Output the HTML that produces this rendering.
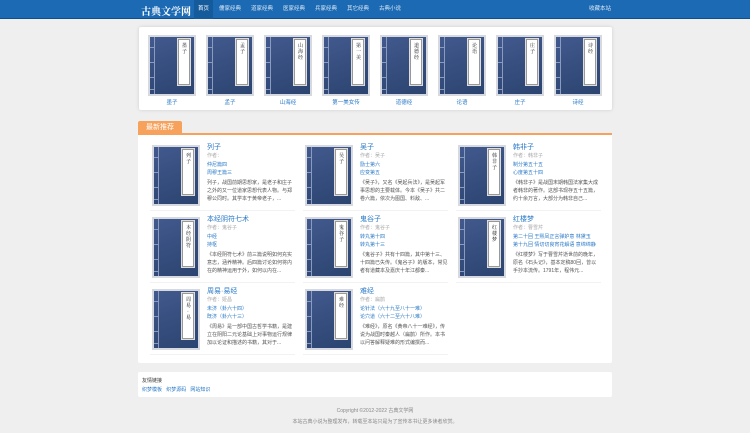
<!DOCTYPE html><html><head><meta charset="utf-8"><style>
*{margin:0;padding:0;box-sizing:border-box}
body{width:750px;height:433px;background:#efefef;font-family:"Liberation Sans","Noto Sans CJK SC",sans-serif;font-size:5px;color:#555;overflow:hidden;position:relative}
a{color:#2a7ac8;text-decoration:none}
.nav{position:absolute;left:0;top:0;width:750px;height:19px;background:#1b6ab3;border-bottom:1px solid #0f4f8a}
.logo{position:absolute;left:141px;top:3px;color:#fff;font-family:"Liberation Serif","Noto Serif CJK SC",serif;font-weight:bold;font-size:10px}
.nav .it{position:absolute;top:0;height:19px;line-height:19px;color:#dde9f5;font-size:5.5px}
.nav .on{background:#155a9a;color:#fff}
.box{position:absolute;background:#fff;border-radius:2px}
.cover{position:absolute;width:48px;height:61px;background:linear-gradient(160deg,#41598d,#2c4470);border:2px solid #d6d9e0}
.cover:before{content:"";position:absolute;left:4px;top:0;bottom:0;border-left:1px solid #8a9bbd}
.cover i{position:absolute;left:0;width:4px;border-top:1px solid #8a9bbd}
.lab{position:absolute;right:4px;top:2px;width:12px;height:46px;background:#fff;border:1px solid #999;box-shadow:0 0 0 1px #ddd;font-size:5px;color:#111;text-align:center;line-height:6px;padding:3px 3px 0;font-family:"Noto Serif CJK SC",serif;word-break:break-all}
.t{position:absolute;width:60px;text-align:center;font-size:5.5px;color:#2a7ac8}
.item{position:absolute;width:145px;height:68px;border-bottom:1px solid #f2f2f2}
.item .cover{left:2px;top:2px}
.item .tx{position:absolute;left:57px;top:0;width:88px;line-height:8.5px}
.tx .h{font-size:7px;color:#2a7ac8;line-height:9px}
.tx .a{color:#aaa}
.tx .d{color:#555;line-height:8px;margin-top:1px}
</style></head><body>
<div class="nav">
<div class="logo">古典文学网</div>
<div class="it on" style="left:194px;width:19px;text-align:center">首页</div>
<div class="it" style="left:219px">儒家经典</div>
<div class="it" style="left:251px">道家经典</div>
<div class="it" style="left:283px">医家经典</div>
<div class="it" style="left:315px">兵家经典</div>
<div class="it" style="left:347px">其它经典</div>
<div class="it" style="left:379px">古典小说</div>
<div class="it" style="left:589px">收藏本站</div>
</div>
<div class="box" style="left:139px;top:27px;width:473px;height:83px;box-shadow:0 0 3px #ccc">
</div>
<div id="tops"></div>
<div class="box" style="left:138px;top:121px;width:44px;height:13px;background:#f6a25c;border-radius:2px 2px 0 0;color:#fff;font-size:7px;line-height:13px;text-align:center">最新推荐</div>
<div class="box" style="left:138px;top:133px;width:474px;height:230px;border-top:2px solid #f6a25c;border-radius:0 0 2px 2px"></div>
<div id="items"></div>
<div class="box" style="left:138px;top:372px;width:474px;height:25px">
<div style="position:absolute;left:4px;top:5px;color:#333">友情链接</div>
<div style="position:absolute;left:4px;top:14px"><a>织梦模板</a>&nbsp;&nbsp;&nbsp;<a>织梦源码</a>&nbsp;&nbsp;&nbsp;<a>网站知识</a></div>
</div>
<div style="position:absolute;left:0;width:750px;top:406px;text-align:center;color:#888;line-height:11px">Copyright ©2012-2022 古典文学网<br>本站古典小说为整理发布，转载至本站只是为了宣传本书让更多读者欣赏。</div>
<script>
function cov(x,y,l){return `<div class="cover" style="left:${x}px;top:${y}px"><i style="top:10px"></i><i style="top:25px"></i><i style="top:40px"></i><i style="top:52px"></i><div class="lab">${l}</div></div>`}
var tops=["墨子","孟子","山海经","第一美女传","道德经","论语","庄子","诗经"],h="";
tops.forEach((t,i)=>{var x=148+i*58;h+=cov(x,35,t.slice(0,3))+`<div class="t" style="left:${x-6}px;top:98px">${t}</div>`});
document.getElementById('tops').outerHTML=h;
var it=[["列子","作者：","仲尼篇四","周穆王篇三","列子，战国前期思想家，是老子和庄子之外的又一位道家思想代表人物。与郑穆公同时。其学本于黄帝老子，..."],
["吴子","作者：吴子","励士第六","应变第五","《吴子》，又名《吴起兵法》，是吴起军事思想的主要载体。今本《吴子》共二卷六篇，依次为图国、料敌、..."],
["韩非子","作者：韩非子","制分第五十五","心度第五十四","《韩非子》是战国末期韩国法家集大成者韩非的著作。这部书现存五十五篇，约十余万言，大部分为韩非自己..."],
["本经阴符七术","作者：鬼谷子","中经","持枢","《本经阴符七术》前三篇说明如何充实意志，涵养精神。后四篇讨论如何将内在的精神运用于外，如何以内在..."],
["鬼谷子","作者：鬼谷子","转丸第十四","转丸第十三","《鬼谷子》共有十四篇，其中第十三、十四篇已失传。《鬼谷子》的版本，常见者有道藏本及嘉庆十年江都秦..."],
["红楼梦","作者：曹雪芹","第二十回 王熙凤正言弹妒意 林黛玉","第十九回 情切切良宵花解语 意绵绵静","《红楼梦》写于曹雪芹逝世前的晚年，原名《石头记》，基本定稿80回，曾以手抄本流传。1791年，程伟元..."],
["周易·易经","作者：姬昌","未济（卦六十四）","既济（卦六十三）","《周易》是一部中国古哲学书籍，是建立在阴阳二元论基础上对事物运行规律加以论证和描述的书籍，其对于..."],
["难经","作者：扁鹊","论针法（六十九至八十一难）","论穴道（六十二至六十八难）","《难经》，原名《黄帝八十一难经》，传说为战国时秦越人（扁鹊）所作。本书以问答解释疑难的形式编撰而..."]];
h="";it.forEach((d,i)=>{var x=150+(i%3)*153,y=143+Math.floor(i/3)*72;
h+=`<div class="item" style="left:${x}px;top:${y}px">${cov(2,2,d[0].slice(0,4))}<div class="tx"><div class="h">${d[0]}</div><div class="a">${d[1]}</div><div><a>${d[2]}</a></div><div><a>${d[3]}</a></div><div class="d">${d[4]}</div></div></div>`});
document.getElementById('items').outerHTML=h;
</script>
</body></html>
